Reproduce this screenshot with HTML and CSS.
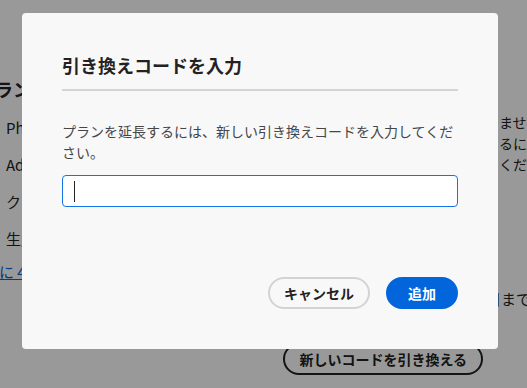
FILE: index.html
```html
<!DOCTYPE html>
<html lang="ja">
<head>
<meta charset="utf-8">
<title>引き換えコードを入力</title>
<link rel="stylesheet" href="styles.css">
</head>
<body>
<div class="page">
  <div class="top">
    <div class="left">
      <h2 class="plan-title">プラン</h2>
      <ul class="apps">
        <li>Photoshop</li>
        <li>Adobe Express</li>
        <li>クラウドストレージ</li>
        <li>生成AIクレジット</li>
      </ul>
      <a class="more-link" href="#">に 4 つのアプリ</a>
    </div>
    <div class="right">
      <p class="right-line">ません。</p>
      <p class="right-line">るには</p>
      <p class="right-line">ください。</p>
    </div>
  </div>
  <p class="until">日まで有効です</p>
  <div class="page-actions">
    <button class="outline-btn" type="button">新しいコードを引き換える</button>
  </div>
</div>

<div class="overlay">
  <section class="dialog" role="dialog" aria-labelledby="dlg-title">
    <h1 class="dialog-title" id="dlg-title">引き換えコードを入力</h1>
    <hr class="divider">
    <p class="dialog-text">プランを延長するには、新しい引き換えコードを入力してください。</p>
    <div class="field" role="textbox" aria-label="引き換えコード"><span class="caret"></span></div>
    <div class="dialog-actions">
      <button class="btn btn-secondary" type="button">キャンセル</button>
      <button class="btn btn-primary" type="button">追加</button>
    </div>
  </section>
</div>
</body>
</html>
```

FILE: styles.css
```css
* {
  box-sizing: border-box;
}

html, body {
  margin: 0;
  padding: 0;
  width: 527px;
  height: 388px;
  overflow: hidden;
  background: #ffffff;
}

body {
  font-family: "Noto Sans CJK JP", "Noto Sans", sans-serif;
  color: #222222;
}

/* ---------- background page ---------- */
.page {
  padding-top: 77px;
}

.top {
  display: flex;
  align-items: flex-start;
}

.left {
  margin-left: -23px;
  width: 522px;
  flex: none;
}

.plan-title {
  margin: 0;
  font-size: 18px;
  line-height: 24px;
  font-weight: 700;
  white-space: nowrap;
}

.apps {
  list-style: none;
  margin: 16px 0 0;
  padding: 0 0 0 29px;
  font-size: 15px;
  line-height: 22px;
}

.apps li {
  margin-bottom: 15px;
  white-space: nowrap;
}

.apps li:last-child {
  margin-bottom: 0;
}

.more-link {
  display: block;
  margin: 11px 0 0 22px;
  font-size: 15px;
  line-height: 22px;
  color: #0265dc;
  text-decoration: underline;
  white-space: nowrap;
}

.right {
  padding-top: 35px;
  flex: none;
}

.right-line {
  margin: 0;
  font-size: 14px;
  line-height: 21px;
  white-space: nowrap;
}

.until {
  margin: 5px 0 0;
  padding-left: 486px;
  font-size: 15px;
  line-height: 21px;
  white-space: nowrap;
}

.page-actions {
  display: flex;
  justify-content: flex-end;
  padding-right: 44px;
  margin-top: 34px;
}

.outline-btn {
  height: 32px;
  padding: 0 14px;
  border: 2px solid #222222;
  border-radius: 16px;
  background: transparent;
  color: #222222;
  font-family: inherit;
  font-size: 14px;
  font-weight: 700;
  line-height: 28px;
  white-space: nowrap;
}

/* ---------- modal ---------- */
.overlay {
  position: fixed;
  inset: 0;
  background: rgba(0, 0, 0, 0.4);
  padding: 13px 0 0 22px;
}

.dialog {
  width: 476px;
  height: 336px;
  background: #f8f8f8;
  border-radius: 4px;
  padding: 40px;
  display: flex;
  flex-direction: column;
}

.dialog-title {
  margin: 0;
  font-size: 18px;
  line-height: 24px;
  font-weight: 700;
  color: #222222;
}

.divider {
  margin: 12px 0 0;
  height: 2px;
  border: 0;
  background: #d5d5d5;
}

.dialog-text {
  margin: 30px 0 0;
  font-size: 14px;
  line-height: 21px;
  color: #464646;
}

.field {
  margin-top: 12px;
  height: 32px;
  background: #ffffff;
  border: 1px solid #1473e6;
  border-radius: 4px;
  padding: 0 11px;
  display: flex;
  align-items: center;
}

.caret {
  width: 1px;
  height: 21px;
  background: #222222;
}

.dialog-actions {
  margin-top: auto;
  display: flex;
  justify-content: flex-end;
  gap: 16px;
}

.btn {
  height: 32px;
  min-width: 72px;
  padding: 0 14px;
  border-radius: 16px;
  font-family: inherit;
  font-size: 14px;
  font-weight: 700;
  line-height: 28px;
  white-space: nowrap;
}

.btn-secondary {
  border: 2px solid #d3d3d3;
  background: transparent;
  color: #222222;
}

.btn-primary {
  border: 2px solid #0265dc;
  background: #0265dc;
  color: #ffffff;
}
```
